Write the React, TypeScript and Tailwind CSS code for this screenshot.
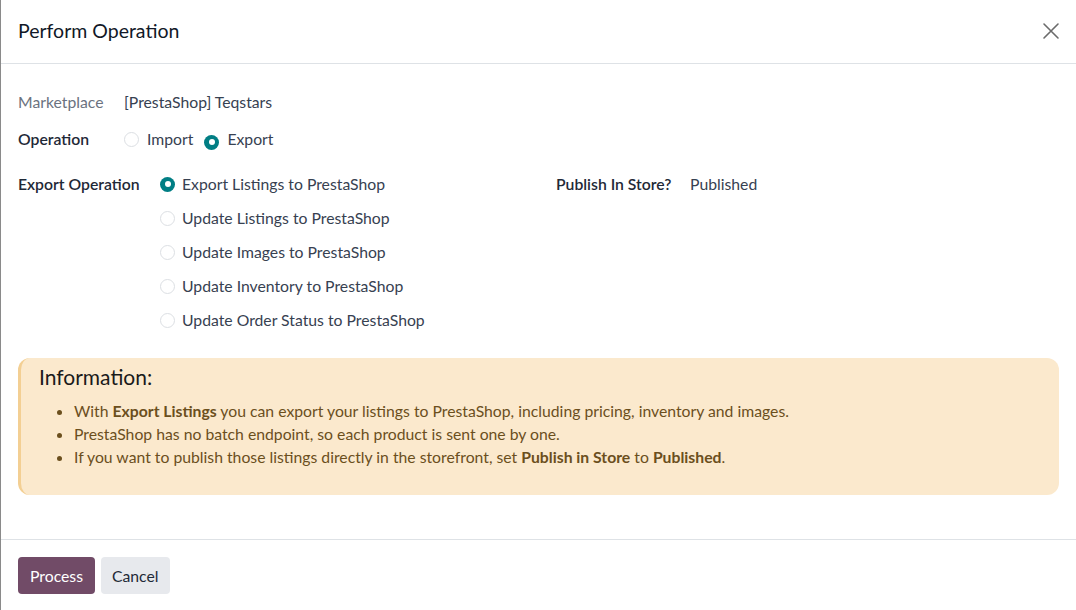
import React from "react";

function Radio({ checked }: { checked?: boolean }) {
  return checked ? (
    <span className="inline-flex h-[15px] w-[15px] items-center justify-center rounded-full bg-[#017e84]">
      <span className="h-[6px] w-[6px] rounded-full bg-white" />
    </span>
  ) : (
    <span className="inline-block h-[15px] w-[15px] rounded-full border border-[#dcdfe3] bg-white" />
  );
}

export default function App() {
  const ops = [
    "Export Listings to PrestaShop",
    "Update Listings to PrestaShop",
    "Update Images to PrestaShop",
    "Update Inventory to PrestaShop",
    "Update Order Status to PrestaShop",
  ];
  return (
    <div
      className="flex h-[610px] w-[1076px] flex-col border-l border-[#8a8a8a] bg-white text-[15.75px] text-[#374151]"
      style={{ fontFamily: "Lato, 'Open Sans', sans-serif" }}
    >
      <div className="flex h-[64px] shrink-0 items-center justify-between border-b border-[#dee2e6] pb-[2px] pl-[17px] pr-[16px]">
        <div className="text-[19.5px] text-[#111827]">Perform Operation</div>
        <svg width="18" height="18" viewBox="0 0 18 18" className="text-[#6b6b6b]">
          <path d="M2 2 L16 16 M16 2 L2 16" stroke="currentColor" strokeWidth="1.6" strokeLinecap="round" />
        </svg>
      </div>
      <div className="flex flex-1 flex-col px-[17px] pt-[27px]">
        <div className="flex h-[22px] items-center">
          <div className="w-[106px] text-[#6b7280]">Marketplace</div>
          <div className="text-[#374151]">[PrestaShop] Teqstars</div>
        </div>
        <div className="mt-[15px] flex h-[22px] items-center">
          <div className="w-[106px] font-semibold text-[#1f2937]">Operation</div>
          <div className="flex items-center">
            <Radio />
            <span className="ml-[8px]">Import</span>
            <span className="ml-[11px]"><Radio checked /></span>
            <span className="ml-[8px]">Export</span>
          </div>
        </div>
        <div className="mt-[23px] flex">
          <div className="flex w-[538px]">
            <div className="flex h-[22px] w-[142px] items-center font-semibold text-[#1f2937]">Export Operation</div>
            <div className="flex flex-col gap-[12px]">
              {ops.map((o, i) => (
                <div key={o} className="flex h-[22px] items-center">
                  <Radio checked={i === 0} />
                  <span className="ml-[7px]">{o}</span>
                </div>
              ))}
            </div>
          </div>
          <div className="flex h-[22px] items-center">
            <div className="w-[134px] font-semibold text-[#1f2937]">Publish In Store?</div>
            <div>Published</div>
          </div>
        </div>
        <div className="mt-[27px] h-[137px] rounded-[12px] border-l-[3px] border-[#f3cf93] bg-[#fbe9cd] pl-[18px] pr-[20px] pt-[3px]">
          <div className="text-[21px] text-[#1a1a1a]">Information:</div>
          <ul className="mt-[6px] list-disc pl-[35px] text-[15.75px] leading-[23px] text-[#6b4f1d]">
            <li>
              With <b>Export Listings</b> you can export your listings to PrestaShop, including pricing, inventory and images.
            </li>
            <li>PrestaShop has no batch endpoint, so each product is sent one by one.</li>
            <li>
              If you want to publish those listings directly in the storefront, set <b>Publish in Store</b> to <b>Published</b>.
            </li>
          </ul>
        </div>
        <div className="flex-1" />
      </div>
      <div className="flex h-[71px] shrink-0 items-start gap-[6px] border-t border-[#dee2e6] px-[17px] pt-[17px]">
        <button className="h-[37px] rounded-[4px] bg-[#714b67] px-[12px] text-[15.75px] text-white">Process</button>
        <button className="h-[37px] rounded-[4px] bg-[#e7e9ed] px-[11px] text-[15.75px] text-[#1f2937]">Cancel</button>
      </div>
    </div>
  );
}
